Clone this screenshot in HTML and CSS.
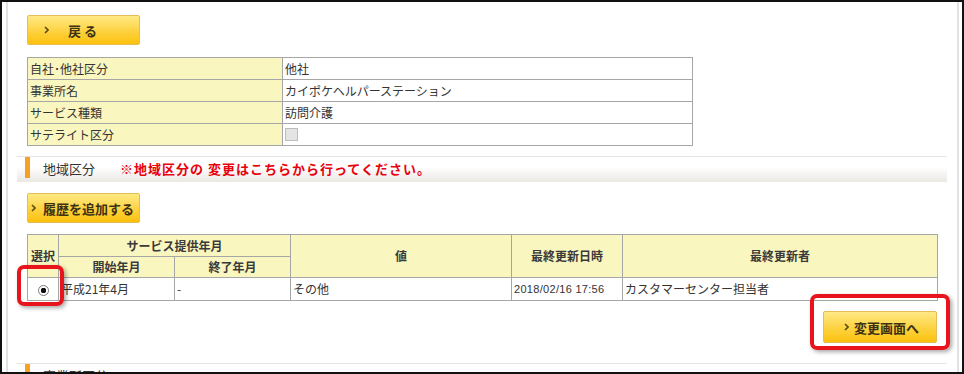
FILE: index.html
```html
<!DOCTYPE html>
<html lang="ja">
<head>
  <meta charset="UTF-8">
  <title>地域区分</title>
  <link rel="stylesheet" href="styles.css">
</head>
<body>
  <div class="frame">
    <div class="page">
      <div class="inner">
        <a href="#" class="btn btn-back"><span class="arr"><svg width="5" height="8" viewBox="0 0 5 8"><polyline points="1,1 4,4 1,7" /></svg></span><span>戻る</span></a>

        <table class="info">
          <colgroup><col class="c-label"><col></colgroup>
          <tr><th>自社･他社区分</th><td>他社</td></tr>
          <tr><th>事業所名</th><td>カイポケヘルパーステーション</td></tr>
          <tr><th>サービス種類</th><td>訪問介護</td></tr>
          <tr><th>サテライト区分</th><td><span class="chk"></span></td></tr>
        </table>
      </div>

      <div class="sec-head">
        <span class="sec-bar"></span>
        <span class="sec-title">地域区分</span>
        <span class="sec-note">※地域区分の 変更はこちらから行ってください。</span>
      </div>

      <div class="inner">
        <a href="#" class="btn btn-add"><span class="arr"><svg width="5" height="8" viewBox="0 0 5 8"><polyline points="1,1 4,4 1,7" /></svg></span><span>履歴を追加する</span></a>

        <table class="hist">
          <colgroup>
            <col style="width:31px"><col style="width:116px"><col style="width:116px">
            <col style="width:221px"><col style="width:111px"><col>
          </colgroup>
          <tr class="h1">
            <th rowspan="2">選択</th>
            <th colspan="2">サービス提供年月</th>
            <th rowspan="2">値</th>
            <th rowspan="2">最終更新日時</th>
            <th rowspan="2">最終更新者</th>
          </tr>
          <tr class="h2">
            <th>開始年月</th>
            <th>終了年月</th>
          </tr>
          <tr class="row">
            <td class="sel"><span class="radio"></span></td>
            <td>平成21年4月</td>
            <td>-</td>
            <td>その他</td>
            <td class="date">2018/02/16 17:56</td>
            <td>カスタマーセンター担当者</td>
          </tr>
        </table>

        <div class="actions">
          <a href="#" class="btn btn-next"><span class="arr"><svg width="5" height="8" viewBox="0 0 5 8"><polyline points="1,1 4,4 1,7" /></svg></span><span>変更画面へ</span></a>
        </div>
      </div>

      <div class="sec-head sec-next">
        <span class="sec-bar"></span>
        <span class="sec-title">事業所区分</span>
      </div>
    </div>

    <!-- 注釈の赤枠 -->
    <div class="mark mark-radio"></div>
    <div class="mark mark-btn"></div>
  </div>
</body>
</html>
```

FILE: styles.css
```css
:root {
  --kiiro: #faf6bf;
  --waku: #a6a6a6;
  --moji: #333;
  --aka: #e8141c;
}

body {
  margin: 0;
  padding: 0;
  background: #fff;
  font-family: "Noto Sans CJK JP", "Liberation Sans", sans-serif;
  font-size: 12px;
  color: var(--moji);
}

.frame {
  position: relative;
  width: 964px;
  height: 374px;
  box-sizing: border-box;
  border: 2px solid #111;
  padding: 0 3px 0 4px;
  overflow: hidden;
}

.page {
  height: 100%;
  box-sizing: border-box;
  border-left: 2px solid #e2e2e2;
  border-right: 2px solid #e2e2e2;
  padding: 13px 10px 0 9px;
}

.inner {
  padding: 0 10px;
}

/* ボタン */
.btn {
  display: flex;
  align-items: center;
  box-sizing: border-box;
  width: 113px;
  height: 30px;
  border: 1px solid #e6bd55;
  border-radius: 2px;
  background: linear-gradient(#ffe985, #fdd03a 60%, #fcc10e);
  color: #3d3212;
  font-weight: bold;
  font-size: 13px;
  text-decoration: none;
  line-height: 1;
}

.btn .arr {
  display: flex;
}

.btn polyline {
  fill: none;
  stroke: #5c4c14;
  stroke-width: 1.6;
}

.btn-back {
  padding-left: 16px;
  gap: 19px;
  letter-spacing: 3px;
}

.btn-add {
  margin-top: 11px;
  padding-left: 3px;
  gap: 7px;
}

.btn-next {
  width: 114px;
  height: 32px;
  padding-left: 20px;
  gap: 5px;
}

/* 基本情報テーブル */
table {
  border-collapse: collapse;
  table-layout: fixed;
}

.info {
  width: 666px;
  margin-top: 12px;
}

.info .c-label {
  width: 255px;
}

.info th,
.info td {
  height: 21px;
  padding: 0 2px;
  border: 1px solid var(--waku);
  text-align: left;
  font-weight: normal;
  line-height: 20px;
  white-space: nowrap;
}

.info th {
  background: var(--kiiro);
}

.chk {
  display: inline-block;
  width: 11px;
  height: 11px;
  margin-top: 3px;
  border: 1px solid #bdbdbd;
  background: #e4e4e4;
  vertical-align: top;
}

/* セクション見出し */
.sec-head {
  display: flex;
  align-items: flex-start;
  height: 25px;
  margin-top: 10px;
  border-top: 1px solid #e6e4e0;
  background: linear-gradient(#fff, #fff 40%, #ebe8e4);
}

.sec-bar {
  width: 5px;
  height: 21px;
  margin-left: 8px;
  background: #f6a024;
}

.sec-title {
  margin: 3px 0 0 13px;
  font-size: 13px;
  line-height: 18px;
  color: #333;
}

.sec-note {
  margin: 3px 0 0 25px;
  font-size: 13px;
  line-height: 18px;
  font-weight: bold;
  letter-spacing: 1px;
  color: #e8000c;
}

.sec-next {
  margin-top: 20px;
}

/* 履歴テーブル */
.hist {
  width: 911px;
  margin-top: 11px;
}

.hist th,
.hist td {
  border: 1px solid var(--waku);
  padding: 0 2px;
  white-space: nowrap;
  line-height: 18px;
}

.hist th {
  background: var(--kiiro);
  font-weight: bold;
  color: #3a3a3a;
}

.hist .h1 th {
  height: 21px;
}

.hist .h2 th {
  height: 20px;
}

.hist .row td {
  height: 22px;
  text-align: left;
}

.hist td.sel {
  text-align: center;
}

.hist td.date {
  font-family: "Liberation Sans", sans-serif;
  font-size: 11px;
  letter-spacing: 0.3px;
}

.radio {
  display: inline-block;
  width: 9px;
  height: 9px;
  border: 1px solid #7a7a7a;
  border-radius: 50%;
  background: radial-gradient(circle, #111 0 2.5px, #fff 3px);
  vertical-align: middle;
}

.actions {
  display: flex;
  justify-content: flex-end;
  margin-top: 10px;
}

/* 赤枠の注釈 */
.mark {
  position: absolute;
  border: 4px solid var(--aka);
  border-radius: 7px;
  box-shadow: 2px 2px 4px rgba(0,0,0,0.35);
}

.mark-radio {
  left: 15px;
  top: 263px;
  width: 39px;
  height: 33px;
}

.mark-btn {
  left: 808px;
  top: 292px;
  width: 132px;
  height: 48px;
}
```
